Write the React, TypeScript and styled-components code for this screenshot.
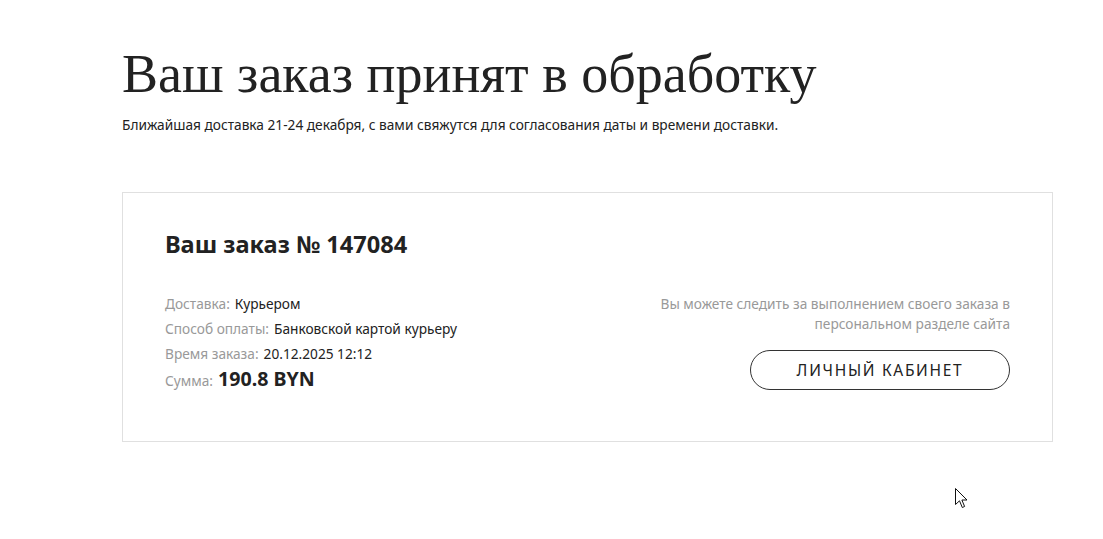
import React from 'react';
import styled, { createGlobalStyle } from 'styled-components';

const GlobalStyle = createGlobalStyle`
  html, body {
    margin: 0;
    padding: 0;
    background: #fff;
  }
  body {
    font-family: "Noto Sans", "Open Sans", sans-serif;
    color: #222;
  }
`;

const Page = styled.main`
  position: relative;
  width: 1103px;
  height: 539px;
  overflow: hidden;
  box-sizing: border-box;
  padding: 41px 50px 0 122px;
`;

const Title = styled.h1`
  margin: 0;
  font-family: "Liberation Serif", "DejaVu Serif", serif;
  font-weight: 400;
  font-size: 54px;
  line-height: 66px;
  color: #222;
`;

const Lead = styled.p`
  margin: 9px 0 0;
  font-size: 13.7px;
  line-height: 18px;
  color: #222;
`;

const Card = styled.section`
  margin-top: 58px;
  border: 1px solid #e0e0e0;
  height: 250px;
  box-sizing: border-box;
  padding: 36px 42px 0 42px;
`;

const OrderTitle = styled.h2`
  margin: 0;
  font-size: 23.6px;
  line-height: 30px;
  font-weight: 700;
  color: #222;
`;

const Body = styled.div`
  display: flex;
  justify-content: space-between;
  margin-top: 32px;
`;

const Info = styled.dl`
  margin: 0;
  display: flex;
  flex-direction: column;
`;

const Row = styled.div`
  display: flex;
  align-items: baseline;
  gap: 5px;
  height: 25px;
  font-size: 13.7px;
  line-height: 25px;
`;

const Label = styled.dt`
  color: #999;
`;

const Value = styled.dd<{ $big?: boolean }>`
  margin: 0;
  color: #222;
  font-size: ${p => (p.$big ? '19.6px' : '13.7px')};
  font-weight: ${p => (p.$big ? 700 : 400)};
`;

const Aside = styled.div`
  display: flex;
  flex-direction: column;
  align-items: flex-end;
  padding-top: 3px;
`;

const Hint = styled.p`
  margin: 0;
  text-align: right;
  font-size: 13.7px;
  line-height: 20px;
  color: #999;
  width: 370px;
`;

const CabinetButton = styled.button`
  margin-top: 16px;
  width: 260px;
  height: 40px;
  border: 1px solid #333;
  border-radius: 20px;
  background: #fff;
  font-family: inherit;
  font-size: 15.5px;
  letter-spacing: 1.7px;
  color: #222;
  cursor: pointer;
`;

const Cursor = styled.svg`
  position: absolute;
  left: 955px;
  top: 488px;
`;

export default function App() {
  return (
    <>
      <GlobalStyle />
      <Page>
        <Title>Ваш заказ принят в обработку</Title>
        <Lead>
          Ближайшая доставка 21-24 декабря, с вами свяжутся для согласования даты и времени доставки.
        </Lead>
        <Card>
          <OrderTitle>Ваш заказ № 147084</OrderTitle>
          <Body>
            <Info>
              <Row>
                <Label>Доставка:</Label>
                <Value>Курьером</Value>
              </Row>
              <Row>
                <Label>Способ оплаты:</Label>
                <Value>Банковской картой курьеру</Value>
              </Row>
              <Row>
                <Label>Время заказа:</Label>
                <Value>20.12.2025 12:12</Value>
              </Row>
              <Row>
                <Label>Сумма:</Label>
                <Value $big>190.8 BYN</Value>
              </Row>
            </Info>
            <Aside>
              <Hint>Вы можете следить за выполнением своего заказа в персональном разделе сайта</Hint>
              <CabinetButton type="button">ЛИЧНЫЙ КАБИНЕТ</CabinetButton>
            </Aside>
          </Body>
        </Card>
        <Cursor width="13" height="21" viewBox="0 0 13 21">
          <path
            d="M0.5 0.5 L0.5 16.5 L4.5 12.8 L7.3 19.5 L9.6 18.5 L6.9 12 L12 12 Z"
            fill="#fff"
            stroke="#111"
            strokeWidth="1"
            strokeLinejoin="round"
          />
        </Cursor>
      </Page>
    </>
  );
}
